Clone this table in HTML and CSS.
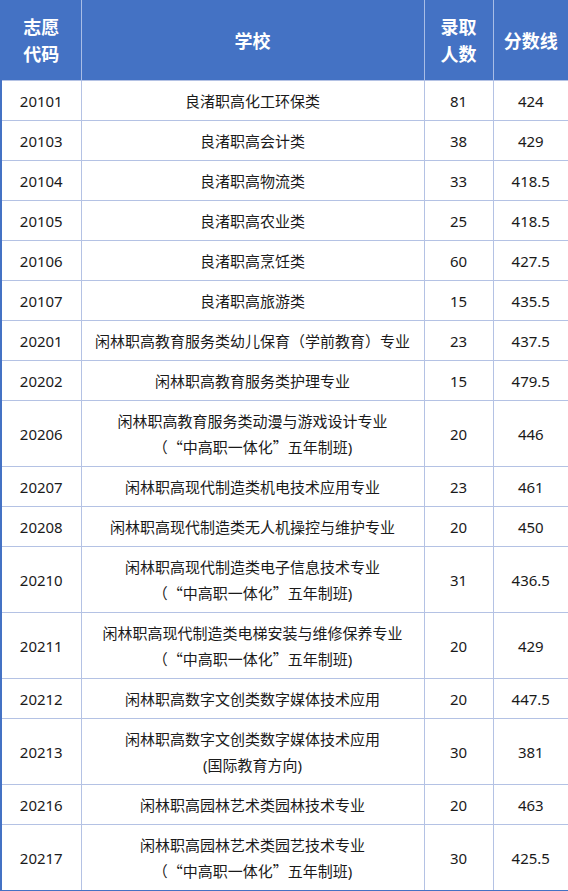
FILE: index.html
```html
<!DOCTYPE html>
<html lang="zh-CN">
<head>
<meta charset="utf-8">
<link rel="stylesheet" href="styles.css">
</head>
<body>
<table class="score-table">
  <colgroup>
    <col class="c-code"><col class="c-school"><col class="c-num"><col class="c-score">
  </colgroup>
  <thead>
    <tr>
      <th>志愿<br>代码</th>
      <th>学校</th>
      <th>录取<br>人数</th>
      <th>分数线</th>
    </tr>
  </thead>
  <tbody>
    <tr><td>20101</td><td>良渚职高化工环保类</td><td>81</td><td>424</td></tr>
    <tr><td>20103</td><td>良渚职高会计类</td><td>38</td><td>429</td></tr>
    <tr><td>20104</td><td>良渚职高物流类</td><td>33</td><td>418.5</td></tr>
    <tr><td>20105</td><td>良渚职高农业类</td><td>25</td><td>418.5</td></tr>
    <tr><td>20106</td><td>良渚职高烹饪类</td><td>60</td><td>427.5</td></tr>
    <tr><td>20107</td><td>良渚职高旅游类</td><td>15</td><td>435.5</td></tr>
    <tr><td>20201</td><td>闲林职高教育服务类幼儿保育（学前教育）专业</td><td>23</td><td>437.5</td></tr>
    <tr><td>20202</td><td>闲林职高教育服务类护理专业</td><td>15</td><td>479.5</td></tr>
    <tr><td>20206</td><td>闲林职高教育服务类动漫与游戏设计专业<br>（<span class="q q-open">“</span>中高职一体化<span class="q q-close">”</span>五年制班)</td><td>20</td><td>446</td></tr>
    <tr><td>20207</td><td>闲林职高现代制造类机电技术应用专业</td><td>23</td><td>461</td></tr>
    <tr><td>20208</td><td>闲林职高现代制造类无人机操控与维护专业</td><td>20</td><td>450</td></tr>
    <tr><td>20210</td><td>闲林职高现代制造类电子信息技术专业<br>（<span class="q q-open">“</span>中高职一体化<span class="q q-close">”</span>五年制班)</td><td>31</td><td>436.5</td></tr>
    <tr><td>20211</td><td>闲林职高现代制造类电梯安装与维修保养专业<br>（<span class="q q-open">“</span>中高职一体化<span class="q q-close">”</span>五年制班)</td><td>20</td><td>429</td></tr>
    <tr><td>20212</td><td>闲林职高数字文创类数字媒体技术应用</td><td>20</td><td>447.5</td></tr>
    <tr><td>20213</td><td>闲林职高数字文创类数字媒体技术应用<br>(国际教育方向)</td><td>30</td><td>381</td></tr>
    <tr><td>20216</td><td>闲林职高园林艺术类园林技术专业</td><td>20</td><td>463</td></tr>
    <tr><td>20217</td><td>闲林职高园林艺术类园艺技术专业<br>（<span class="q q-open">“</span>中高职一体化<span class="q q-close">”</span>五年制班)</td><td>30</td><td>425.5</td></tr>
  </tbody>
</table>
</body>
</html>
```

FILE: styles.css
```css
html, body {
  margin: 0;
  padding: 0;
  background: #ffffff;
}

.score-table {
  width: 568px;
  table-layout: fixed;
  border-collapse: collapse;
  border-left: 2px solid #4472c4;
  border-right: 2px solid #4472c4;
  border-bottom: 2px solid #4472c4;
  font-family: "Noto Sans", "Noto Sans CJK SC", sans-serif;
  color: #1a1a1a;
}

.c-code { width: 80px; }
.c-school { width: 343px; }
.c-num { width: 69px; }
.c-score { width: 76px; }

.score-table th {
  background: #4472c4;
  color: #ffffff;
  font-family: "Noto Sans CJK SC", sans-serif;
  font-weight: 700;
  font-size: 18px;
  line-height: 27px;
  height: 80px;
  padding: 0 2px;
  text-align: center;
  vertical-align: middle;
  border-left: 1px solid #a9bde6;
  border-right: 1px solid #a9bde6;
}

.score-table td {
  font-size: 15px;
  line-height: 26px;
  padding: 6.5px 2px;
  text-align: center;
  vertical-align: middle;
  border: 1px solid #b4c2e4;
}

.q {
  display: inline-block;
  width: 1em;
  font-family: "Noto Sans CJK SC", sans-serif;
}

.q-open { text-align: right; }
.q-close { text-align: left; }
```
